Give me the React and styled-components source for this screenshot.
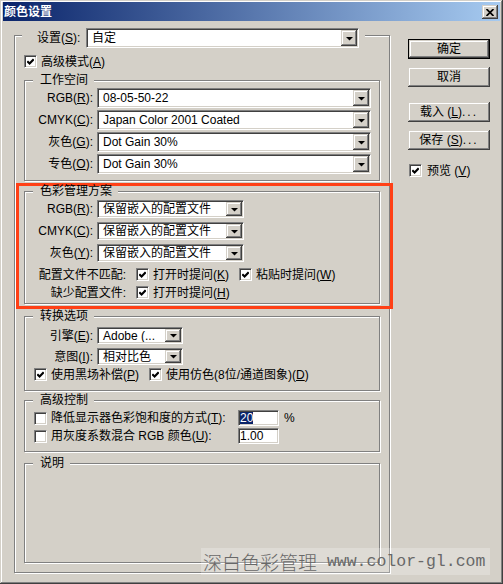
import styled, { createGlobalStyle } from "styled-components";

const GlobalStyle = createGlobalStyle`
  html, body { margin: 0; padding: 0; background: #d4d0c8; }
  body {
    font-family: "Liberation Sans", "Noto Sans CJK SC", sans-serif;
    font-size: 12px;
    line-height: 14px;
    color: #000;
  }
  u { text-underline-offset: 1px; }
`;

const raised = `
  box-shadow: inset -1px -1px 0 #404040, inset 1px 1px 0 #d4d0c8,
    inset -2px -2px 0 #808080, inset 2px 2px 0 #fff;
`;

const sunken = `
  border: 1px solid;
  border-color: #808080 #fff #fff #808080;
  box-shadow: inset 1px 1px 0 #404040, inset -1px -1px 0 #d4d0c8;
`;

const Window = styled.div`
  position: relative;
  box-sizing: border-box;
  width: 503px;
  height: 584px;
  padding: 2px 3px 3px;
  background: #d4d0c8;
  ${raised}
  overflow: hidden;
`;

const TitleBar = styled.div`
  display: flex;
  align-items: center;
  justify-content: space-between;
  height: 19px;
  padding: 0 2px 0 1px;
  background: linear-gradient(to right, #0a246a, #a6caf0);
`;

const Title = styled.span`
  color: #fff;
  font-weight: bold;
  line-height: 14px;
`;

const CloseButton = styled.span`
  display: flex;
  align-items: center;
  justify-content: center;
  width: 16px;
  height: 14px;
  margin-top: 1px;
  background: #d4d0c8;
  ${raised}
`;

const Body = styled.div`
  display: flex;
  align-items: flex-start;
  padding: 1px 0 0 11px;
`;

const OuterGroup = styled.fieldset`
  box-sizing: border-box;
  width: 376px;
  min-width: 0;
  margin: 0;
  padding: 0;
  border: 1px solid #808080;
  box-shadow: inset 1px 1px 0 #fff, 1px 1px 0 #fff;
`;

const OuterLegend = styled.legend`
  display: flex;
  align-items: center;
  margin-left: 7px;
  padding: 6px 6px 0 15px;
  background: #d4d0c8;
`;

const SettingLabel = styled.span`
  width: 49px;
  white-space: nowrap;
`;

const OuterBody = styled.div`
  display: flex;
  flex-direction: column;
  padding: 6px 9px 9px;
`;

const Group = styled.fieldset`
  min-width: 0;
  margin: ${(p) => p.$mt || 0}px 0 0;
  padding: 0;
  border: 1px solid #808080;
  box-shadow: inset 1px 1px 0 #fff, 1px 1px 0 #fff;
`;

const Caption = styled.legend`
  margin-left: 8px;
  padding: 0 6px 0 7px;
  line-height: 11px;
  background: #d4d0c8;
  white-space: nowrap;
`;

const GroupBody = styled.div`
  display: flex;
  flex-direction: column;
  gap: ${(p) => p.$gap || 0}px;
  padding: ${(p) => p.$pad};
  height: ${(p) => (p.$h ? `${p.$h}px` : "auto")};
`;

const Highlight = styled.div`
  margin: 2px -13px 0 -8px;
  padding: 0 10px 2px 5px;
  border: 3px solid #ff4016;
`;

const FieldRow = styled.div`
  display: flex;
  align-items: center;
  gap: 4px;
  margin-top: ${(p) => p.$mt || 0}px;
`;

const FieldLabel = styled.span`
  flex-shrink: 0;
  width: ${(p) => p.$w || 68}px;
  text-align: right;
  white-space: nowrap;
`;

const SelectBox = styled.div`
  box-sizing: border-box;
  display: flex;
  width: ${(p) => p.$w}px;
  height: ${(p) => p.$h}px;
  padding: 1px;
  background: #fff;
  ${sunken}
`;

const SelectValue = styled.span`
  flex: 1;
  display: flex;
  align-items: center;
  padding-left: 4px;
  overflow: hidden;
  white-space: nowrap;
`;

const DropButton = styled.span`
  flex-shrink: 0;
  display: flex;
  align-items: center;
  justify-content: center;
  width: 16px;
  padding-top: 1px;
  box-sizing: border-box;
  background: #d4d0c8;
  ${raised}
`;

const CheckRow = styled.div`
  display: flex;
  align-items: center;
  gap: 10px;
  height: 15px;
  margin-top: ${(p) => p.$mt || 0}px;
  padding-left: ${(p) => p.$pl || 0}px;
`;

const CheckItem = styled.span`
  display: inline-flex;
  align-items: center;
  gap: ${(p) => p.$gap || 4}px;
  white-space: nowrap;
`;

const CheckBox = styled.span`
  box-sizing: border-box;
  flex-shrink: 0;
  display: flex;
  align-items: center;
  justify-content: center;
  width: 13px;
  height: 13px;
  background: #fff;
  ${sunken}
`;

const ControlRow = styled.div`
  display: flex;
  align-items: center;
  height: 16px;
  padding-left: 9px;
`;

const ControlLabel = styled.span`
  width: 183px;
  margin: 0 4px;
  white-space: nowrap;
`;

const TextInput = styled.span`
  box-sizing: border-box;
  display: flex;
  align-items: center;
  width: 41px;
  height: 16px;
  padding-left: 1px;
  background: #fff;
  ${sunken}
`;

const Selected = styled.span`
  background: #0a246a;
  color: #fff;
  line-height: 12px;
`;

const Unit = styled.span`
  margin-left: 5px;
`;

const Side = styled.div`
  display: flex;
  flex-direction: column;
  align-items: flex-start;
  margin-left: 18px;
  padding-top: 17px;
`;

const Button = styled.button`
  box-sizing: border-box;
  width: 82px;
  height: 20px;
  margin: ${(p) => p.$mt || 0}px 0 0;
  padding: 0;
  font: inherit;
  color: #000;
  background: #d4d0c8;
  border: ${(p) => (p.$default ? "1px solid #000" : "none")};
  ${raised}
  white-space: nowrap;
`;

const Dots = styled.span`
  letter-spacing: 2px;
`;

const Watermark = styled.div`
  position: absolute;
  left: 201px;
  top: 548px;
  box-sizing: border-box;
  display: flex;
  align-items: center;
  width: 289px;
  height: 27px;
  padding-left: 2px;
  background: rgba(255, 255, 255, 0.24);
  color: #686868;
  white-space: pre;
`;

const WatermarkCn = styled.span`
  font-family: "Noto Sans CJK SC", sans-serif;
  font-weight: 300;
  font-size: 19px;
  line-height: 22px;
`;

const WatermarkEn = styled.span`
  font-family: "Liberation Mono", monospace;
  font-size: 16.5px;
`;

const Arrow = () => (
  <svg width="7" height="4" viewBox="0 0 7 4">
    <path d="M0 0H7L3.5 3.5Z" fill="#000" />
  </svg>
);

const Select = ({ w, h, children }) => (
  <SelectBox $w={w} $h={h}>
    <SelectValue>{children}</SelectValue>
    <DropButton>
      <Arrow />
    </DropButton>
  </SelectBox>
);

const Check = ({ checked }) => (
  <CheckBox>
    {checked && (
      <svg width="7" height="7" viewBox="0 0 7 7">
        <path d="M0.3 3.2L2.6 5.5L6.7 1.2" stroke="#000" strokeWidth="2.1" fill="none" />
      </svg>
    )}
  </CheckBox>
);

const Mnemonic = ({ name, k, space }) => (
  <>
    {name}
    {space ? " " : ""}(<u>{k}</u>)
  </>
);

const CheckOption = ({ checked, name, k, space, gap }) => (
  <CheckItem $gap={gap}>
    <Check checked={checked} />
    <span>
      <Mnemonic name={name} k={k} space={space} />
    </span>
  </CheckItem>
);

const workspace = [
  ["RGB", "R", "08-05-50-22"],
  ["CMYK", "C", "Japan Color 2001 Coated"],
  ["灰色", "G", "Dot Gain 30%"],
  ["专色", "O", "Dot Gain 30%"],
];

const policies = [
  ["RGB", "R"],
  ["CMYK", "C"],
  ["灰色", "Y"],
];

export default function App() {
  return (
    <>
      <GlobalStyle />
      <Window>
        <TitleBar>
          <Title>颜色设置</Title>
          <CloseButton>
            <svg width="8" height="7" viewBox="0 0 8 7">
              <path d="M0.5 0L7.5 7M7.5 0L0.5 7" stroke="#000" strokeWidth="1.7" />
            </svg>
          </CloseButton>
        </TitleBar>
        <Body>
          <OuterGroup>
            <OuterLegend>
              <SettingLabel>
                <Mnemonic name="设置" k="S" />:
              </SettingLabel>
              <Select w={273} h={20}>
                自定
              </Select>
            </OuterLegend>
            <OuterBody>
              <CheckRow>
                <CheckOption checked name="高级模式" k="A" />
              </CheckRow>

              <Group $mt={6}>
                <Caption>工作空间</Caption>
                <GroupBody $pad="2px 0 6px" $gap={2}>
                  {workspace.map(([name, k, value]) => (
                    <FieldRow key={name}>
                      <FieldLabel>
                        <Mnemonic name={name} k={k} />:
                      </FieldLabel>
                      <Select w={274} h={20}>
                        {value}
                      </Select>
                    </FieldRow>
                  ))}
                </GroupBody>
              </Group>

              <Highlight>
                <Group>
                  <Caption>色彩管理方案</Caption>
                  <GroupBody $pad="3px 0 3px">
                    {policies.map(([name, k], i) => (
                      <FieldRow key={name} $mt={i ? 4 : 0}>
                        <FieldLabel>
                          <Mnemonic name={name} k={k} />:
                        </FieldLabel>
                        <Select w={147} h={18}>
                          保留嵌入的配置文件
                        </Select>
                      </FieldRow>
                    ))}
                    <CheckRow $mt={5}>
                      <FieldLabel $w={101}>配置文件不匹配:</FieldLabel>
                      <CheckOption checked name="打开时提问" k="K" />
                      <CheckOption checked name="粘贴时提问" k="W" />
                    </CheckRow>
                    <CheckRow $mt={3}>
                      <FieldLabel $w={101}>缺少配置文件:</FieldLabel>
                      <CheckOption checked name="打开时提问" k="H" />
                    </CheckRow>
                  </GroupBody>
                </Group>
              </Highlight>

              <Group $mt={2}>
                <Caption>转换选项</Caption>
                <GroupBody $pad="5px 0 8px" $gap={4}>
                  <FieldRow>
                    <FieldLabel>
                      <Mnemonic name="引擎" k="E" />:
                    </FieldLabel>
                    <Select w={86} h={17}>
                      Adobe (...
                    </Select>
                  </FieldRow>
                  <FieldRow>
                    <FieldLabel>
                      <Mnemonic name="意图" k="I" />:
                    </FieldLabel>
                    <Select w={86} h={17}>
                      相对比色
                    </Select>
                  </FieldRow>
                  <CheckRow $mt={-2} $pl={9}>
                    <CheckOption checked name="使用黑场补偿" k="P" />
                    <CheckOption checked name="使用仿色(8位/通道图象)" k="D" />
                  </CheckRow>
                </GroupBody>
              </Group>

              <Group $mt={4}>
                <Caption>高级控制</Caption>
                <GroupBody $pad="4px 0 7px" $gap={2}>
                  <ControlRow>
                    <Check />
                    <ControlLabel>
                      <Mnemonic name="降低显示器色彩饱和度的方式" k="T" />:
                    </ControlLabel>
                    <TextInput>
                      <Selected>20</Selected>
                    </TextInput>
                    <Unit>%</Unit>
                  </ControlRow>
                  <ControlRow>
                    <Check />
                    <ControlLabel>
                      <Mnemonic name="用灰度系数混合 RGB 颜色" k="U" />:
                    </ControlLabel>
                    <TextInput>1.00</TextInput>
                  </ControlRow>
                </GroupBody>
              </Group>

              <Group $mt={6}>
                <Caption>说明</Caption>
                <GroupBody $h={93} />
              </Group>
            </OuterBody>
          </OuterGroup>

          <Side>
            <Button $default>确定</Button>
            <Button $mt={8}>取消</Button>
            <Button $mt={15}>
              <Mnemonic name="载入" k="L" space />
              <Dots>...</Dots>
            </Button>
            <Button $mt={8}>
              <Mnemonic name="保存" k="S" space />
              <Dots>...</Dots>
            </Button>
            <CheckRow $mt={13} $pl={1}>
              <CheckOption checked name="预览" k="V" space gap={5} />
            </CheckRow>
          </Side>
        </Body>
        <Watermark>
          <WatermarkCn>深白色彩管理</WatermarkCn>
          <WatermarkEn> www.color-gl.com</WatermarkEn>
        </Watermark>
      </Window>
    </>
  );
}
